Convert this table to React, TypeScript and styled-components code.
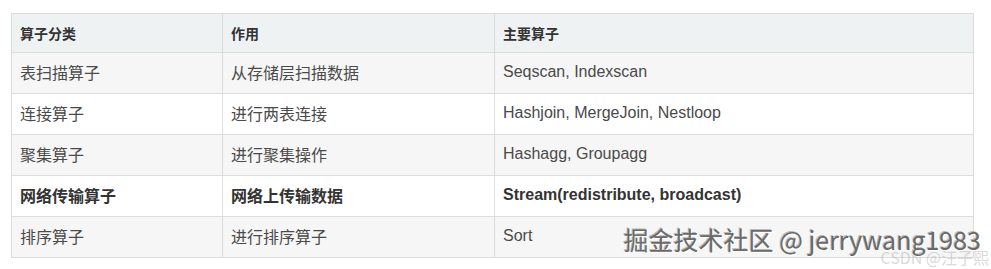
import React from "react";
import styled, { createGlobalStyle } from "styled-components";

const Global = createGlobalStyle`
  html, body { margin: 0; padding: 0; background: #fff; }
  body { font-family: "Liberation Sans", Arial, "Noto Sans CJK SC", sans-serif; }
`;

const Page = styled.div`
  position: relative;
  width: 991px;
  height: 269px;
  padding: 13px 0 0 11px;
  box-sizing: border-box;
  overflow: hidden;
`;

const Table = styled.table`
  border-collapse: collapse;
  width: 962px;
  table-layout: fixed;
  color: #444;
`;

const Row = styled.tr<{ $shade: "head" | "grey" | "white" }>`
  background: ${(p) => (p.$shade === "head" ? "#eff2f3" : p.$shade === "grey" ? "#f6f6f6" : "#ffffff")};
  height: ${(p) => (p.$shade === "head" ? "39px" : "41px")};
`;

const HeadCell = styled.th`
  border: 1px solid #dcdcdc;
  text-align: left;
  padding: 0 8px;
  font-size: 14px;
  font-weight: bold;
  color: #333;
  font-family: "Noto Sans CJK SC", sans-serif;
`;

const Cell = styled.td<{ $bold?: boolean }>`
  border: 1px solid #dcdcdc;
  padding: 0 8px 2px;
  font-size: 16px;
  font-weight: ${(p) => (p.$bold ? "bold" : "normal")};
  color: ${(p) => (p.$bold ? "#333" : "#4a4a4a")};
  font-family: "Liberation Sans", Arial, "Noto Sans CJK SC", sans-serif;
  white-space: nowrap;
`;

const Watermark = styled.div`
  position: absolute;
  right: 10px;
  bottom: 12px;
  font-size: 25px;
  color: #6a6a6a;
  font-family: "Noto Sans CJK SC", sans-serif;
  text-shadow: 1px 1px 0 #fff, -1px -1px 0 #bbb;
  white-space: nowrap;
`;

const Faint = styled.div`
  position: absolute;
  right: 2px;
  bottom: 0px;
  font-size: 16px;
  color: rgba(170, 170, 170, 0.45);
  font-family: "Noto Sans CJK SC", sans-serif;
`;

const rows: { c: [string, string, string]; bold?: boolean }[] = [
  { c: ["表扫描算子", "从存储层扫描数据", "Seqscan, Indexscan"] },
  { c: ["连接算子", "进行两表连接", "Hashjoin, MergeJoin, Nestloop"] },
  { c: ["聚集算子", "进行聚集操作", "Hashagg, Groupagg"] },
  { c: ["网络传输算子", "网络上传输数据", "Stream(redistribute, broadcast)"], bold: true },
  { c: ["排序算子", "进行排序算子", "Sort"] },
];

export default function App() {
  return (
    <Page>
      <Global />
      <Table>
        <colgroup>
          <col style={{ width: 211 }} />
          <col style={{ width: 272 }} />
          <col style={{ width: 479 }} />
        </colgroup>
        <thead>
          <Row $shade="head">
            <HeadCell>算子分类</HeadCell>
            <HeadCell>作用</HeadCell>
            <HeadCell>主要算子</HeadCell>
          </Row>
        </thead>
        <tbody>
          {rows.map((r, i) => (
            <Row key={i} $shade={i % 2 === 0 ? "grey" : "white"}>
              {r.c.map((t, j) => (
                <Cell key={j} $bold={r.bold}>
                  {t}
                </Cell>
              ))}
            </Row>
          ))}
        </tbody>
      </Table>
      <Faint>CSDN @汪子熙</Faint>
      <Watermark>掘金技术社区 @ jerrywang1983</Watermark>
    </Page>
  );
}
